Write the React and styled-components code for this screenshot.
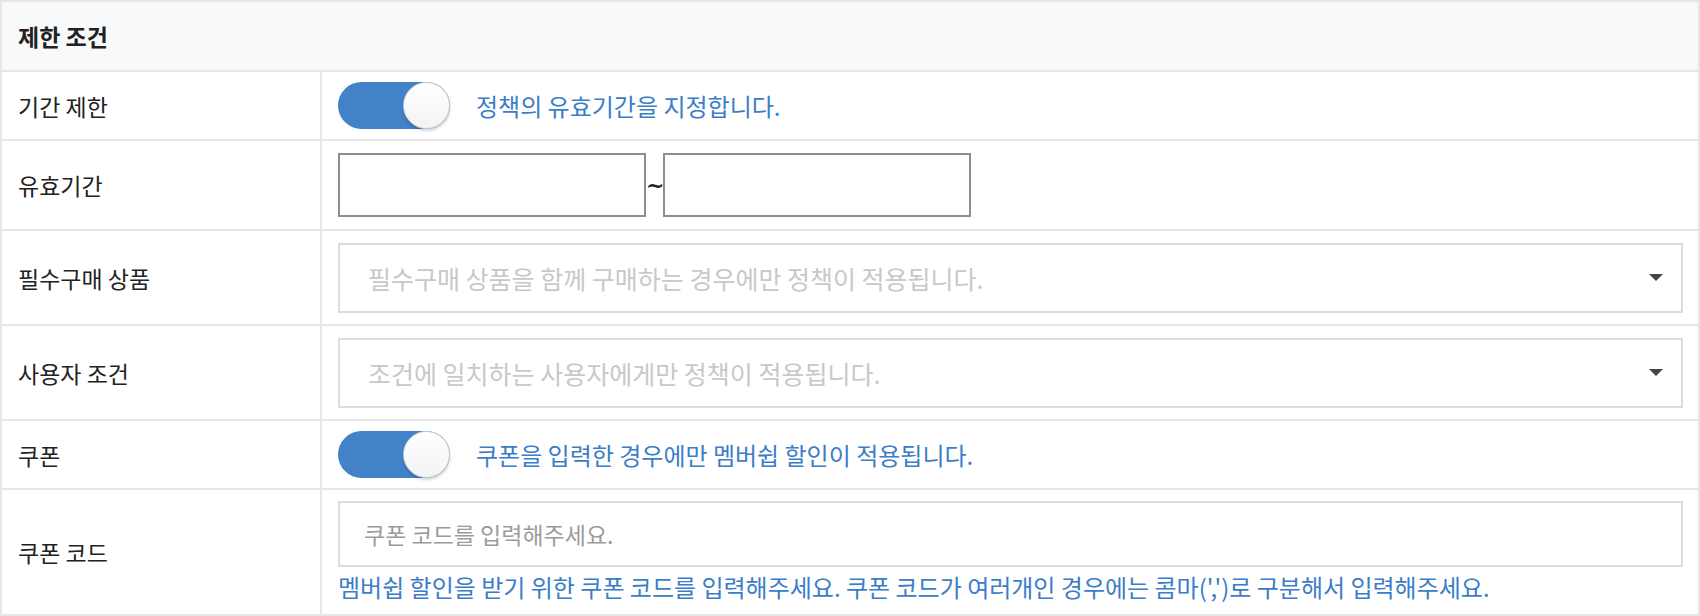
import React from "react";
import styled, { createGlobalStyle } from "styled-components";

const Global = createGlobalStyle`
  html, body { margin: 0; padding: 0; background: #fff; }
  body { font-family: "Noto Sans CJK KR", "Noto Sans", sans-serif; color: #222; }
  * { box-sizing: border-box; }
`;

const Table = styled.section`
  width: 1700px;
  border: 2px solid #e6e6e6;
  background: #fff;
`;

const Header = styled.div`
  height: 70px;
  padding: 0 16px;
  display: flex;
  align-items: center;
  background: #f8f9fa;
  border-bottom: 2px solid #e6e6e6;
  font-size: 23px;
  font-weight: 700;
  color: #222;
`;

const Row = styled.div`
  display: grid;
  grid-template-columns: 320px 1fr;
  min-height: ${(p) => p.$h + (p.$last ? 0 : 2)}px;
  border-bottom: ${(p) => (p.$last ? "none" : "2px solid #e6e6e6")};
`;

const Label = styled.div`
  display: flex;
  align-items: center;
  padding: 0 16px;
  border-right: 2px solid #e6e6e6;
  font-size: 23px;
  color: #222;
`;

const Value = styled.div`
  display: flex;
  flex-direction: ${(p) => (p.$column ? "column" : "row")};
  align-items: ${(p) => (p.$column ? "stretch" : "center")};
  justify-content: ${(p) => (p.$column ? "center" : "flex-start")};
  padding: ${(p) => (p.$column ? "11px 15px 11px 16px" : "0 15px 0 16px")};
`;

const SwitchTrack = styled.span`
  position: relative;
  display: inline-block;
  width: 112px;
  height: 47px;
  border-radius: 24px;
  background: #4282c8;
  flex: none;
`;

const Knob = styled.span`
  position: absolute;
  right: 0;
  top: 0;
  width: 47px;
  height: 47px;
  border-radius: 50%;
  background: linear-gradient(#ffffff, #f3f3f3);
  border: 1px solid #d4d4d4;
  box-shadow: 0 2px 3px rgba(0, 0, 0, 0.18);
`;

const Help = styled.span`
  color: #3b7dc6;
  font-size: 24px;
  line-height: 32px;
  margin-left: ${(p) => (p.$inline ? "26px" : "0")};
  margin-top: ${(p) => (p.$inline ? "0" : "4px")};
`;

const DateBox = styled.div`
  width: 308px;
  height: 64px;
  border: 2px solid #8e8e90;
  background: #fff;
`;

const Tilde = styled.span`
  width: 17px;
  text-align: center;
  font-size: 22px;
  font-weight: 700;
  color: #222;
  font-family: "DejaVu Sans", sans-serif;
`;

const Select = styled.div`
  flex: 1;
  height: 70px;
  border: 2px solid #dcdcdc;
  display: flex;
  align-items: center;
  justify-content: space-between;
  padding: 0 18px 0 28px;
  font-size: 25px;
  color: #c8c8c8;
`;

const Caret = styled.span`
  width: 0;
  height: 0;
  border-left: 7px solid transparent;
  border-right: 7px solid transparent;
  border-top: 7px solid #444;
`;

const TextInput = styled.div`
  height: 66px;
  border: 2px solid #dcdcdc;
  display: flex;
  align-items: center;
  padding: 0 24px;
  font-size: 23px;
  color: #9b9b9b;
`;

const Switch = () => (
  <SwitchTrack>
    <Knob />
  </SwitchTrack>
);

export default function App() {
  return (
    <>
      <Global />
      <Table>
        <Header>제한 조건</Header>
        <Row $h={67}>
          <Label>기간 제한</Label>
          <Value>
            <Switch />
            <Help $inline>정책의 유효기간을 지정합니다.</Help>
          </Value>
        </Row>
        <Row $h={88}>
          <Label>유효기간</Label>
          <Value>
            <DateBox />
            <Tilde>~</Tilde>
            <DateBox />
          </Value>
        </Row>
        <Row $h={93}>
          <Label>필수구매 상품</Label>
          <Value>
            <Select>
              필수구매 상품을 함께 구매하는 경우에만 정책이 적용됩니다.
              <Caret />
            </Select>
          </Value>
        </Row>
        <Row $h={93}>
          <Label>사용자 조건</Label>
          <Value>
            <Select>
              조건에 일치하는 사용자에게만 정책이 적용됩니다.
              <Caret />
            </Select>
          </Value>
        </Row>
        <Row $h={67}>
          <Label>쿠폰</Label>
          <Value>
            <Switch />
            <Help $inline>쿠폰을 입력한 경우에만 멤버쉽 할인이 적용됩니다.</Help>
          </Value>
        </Row>
        <Row $h={124} $last>
          <Label>쿠폰 코드</Label>
          <Value $column>
            <TextInput>쿠폰 코드를 입력해주세요.</TextInput>
            <Help>
              멤버쉽 할인을 받기 위한 쿠폰 코드를 입력해주세요. 쿠폰 코드가 여러개인 경우에는 콤마(',')로 구분해서 입력해주세요.
            </Help>
          </Value>
        </Row>
      </Table>
    </>
  );
}
